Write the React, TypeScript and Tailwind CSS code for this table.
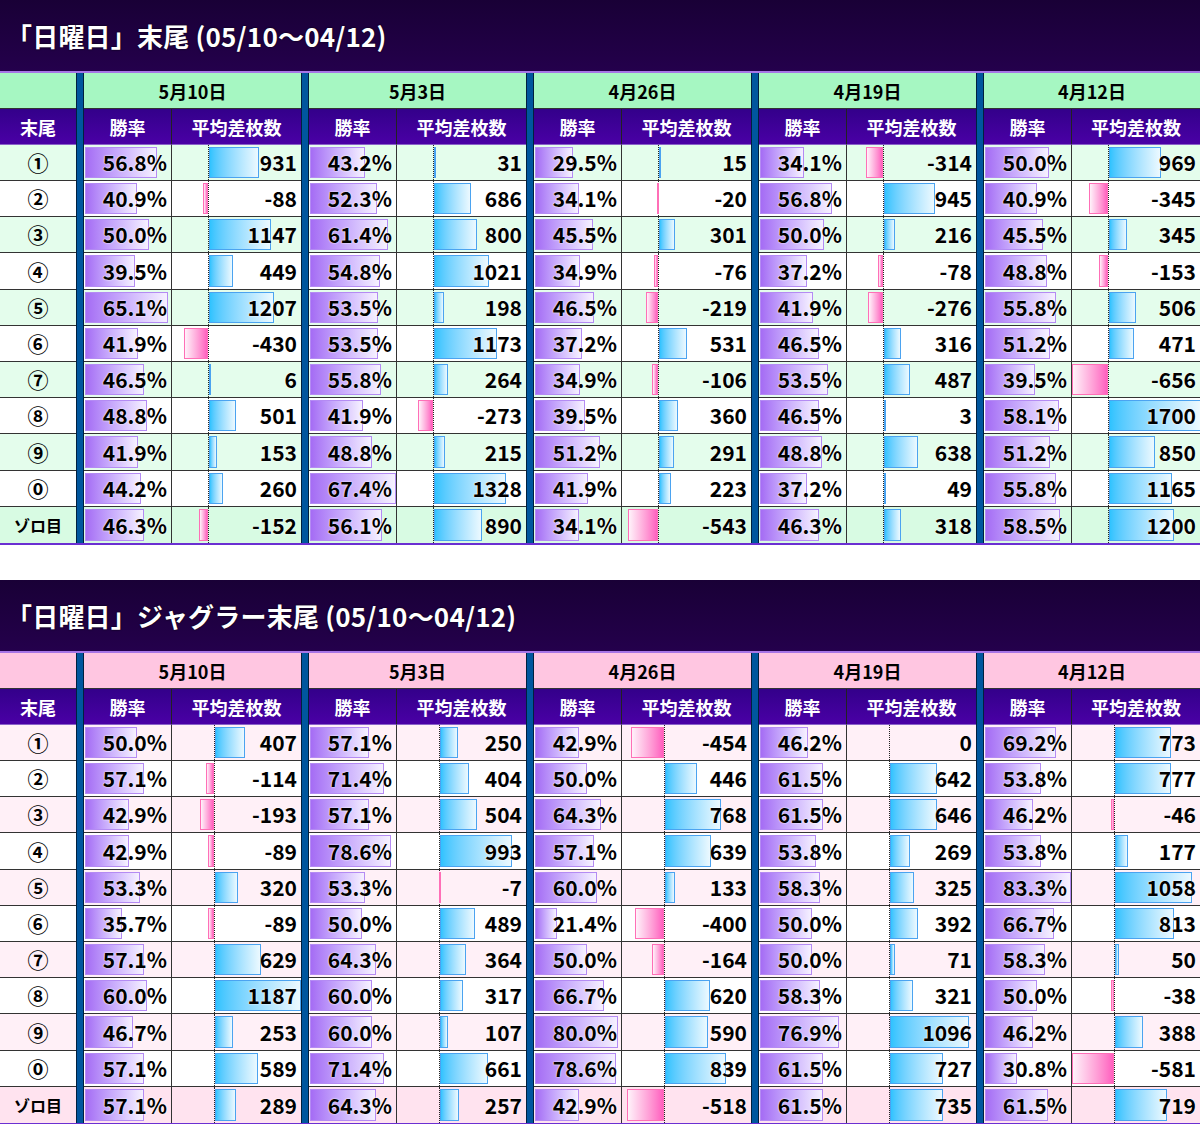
import React from "react";

type Row = [number, number];
type Day = { date: string; rows: Row[] };

const LABELS = ["①", "②", "③", "④", "⑤", "⑥", "⑦", "⑧", "⑨", "⓪", "ゾロ目"];

const TOP: Day[] = [
  { date: "5月10日", rows: [[56.8, 931], [40.9, -88], [50.0, 1147], [39.5, 449], [65.1, 1207], [41.9, -430], [46.5, 6], [48.8, 501], [41.9, 153], [44.2, 260], [46.3, -152]] },
  { date: "5月3日", rows: [[43.2, 31], [52.3, 686], [61.4, 800], [54.8, 1021], [53.5, 198], [53.5, 1173], [55.8, 264], [41.9, -273], [48.8, 215], [67.4, 1328], [56.1, 890]] },
  { date: "4月26日", rows: [[29.5, 15], [34.1, -20], [45.5, 301], [34.9, -76], [46.5, -219], [37.2, 531], [34.9, -106], [39.5, 360], [51.2, 291], [41.9, 223], [34.1, -543]] },
  { date: "4月19日", rows: [[34.1, -314], [56.8, 945], [50.0, 216], [37.2, -78], [41.9, -276], [46.5, 316], [53.5, 487], [46.5, 3], [48.8, 638], [37.2, 49], [46.3, 318]] },
  { date: "4月12日", rows: [[50.0, 969], [40.9, -345], [45.5, 345], [48.8, -153], [55.8, 506], [51.2, 471], [39.5, -656], [58.1, 1700], [51.2, 850], [55.8, 1165], [58.5, 1200]] },
];

const BOTTOM: Day[] = [
  { date: "5月10日", rows: [[50.0, 407], [57.1, -114], [42.9, -193], [42.9, -89], [53.3, 320], [35.7, -89], [57.1, 629], [60.0, 1187], [46.7, 253], [57.1, 589], [57.1, 289]] },
  { date: "5月3日", rows: [[57.1, 250], [71.4, 404], [57.1, 504], [78.6, 993], [53.3, -7], [50.0, 489], [64.3, 364], [60.0, 317], [60.0, 107], [71.4, 661], [64.3, 257]] },
  { date: "4月26日", rows: [[42.9, -454], [50.0, 446], [64.3, 768], [57.1, 639], [60.0, 133], [21.4, -400], [50.0, -164], [66.7, 620], [80.0, 590], [78.6, 839], [42.9, -518]] },
  { date: "4月19日", rows: [[46.2, 0], [61.5, 642], [61.5, 646], [53.8, 269], [58.3, 325], [50.0, 392], [50.0, 71], [58.3, 321], [76.9, 1096], [61.5, 727], [61.5, 735]] },
  { date: "4月12日", rows: [[69.2, 773], [53.8, 777], [46.2, -46], [53.8, 177], [83.3, 1058], [66.7, 813], [58.3, 50], [50.0, -38], [46.2, 388], [30.8, -581], [61.5, 719]] },
];

const GRID =
  "grid grid-cols-[76px_8px_88px_129px_8px_88px_129px_8px_88px_129px_8px_88px_129px_8px_88px_128px]";

type Theme = {
  head: string;
  odd: string;
  even: string;
  zoro: string;
};

const GREEN: Theme = {
  head: "bg-[#a6f7c2]",
  odd: "bg-[#e4fdec]",
  even: "bg-white",
  zoro: "bg-[#d8fbe3]",
};

const PINK: Theme = {
  head: "bg-[#ffc6e1]",
  odd: "bg-[#fff0f7]",
  even: "bg-white",
  zoro: "bg-[#ffe3ef]",
};

function Sep() {
  return <div className="h-full bg-[#00569e] border-x border-[#00203f]" />;
}

const NUM =
  "relative font-bold text-[21px] leading-none text-black [text-shadow:0_0_2px_#ffffff,0_0_1px_#ffffff]";

function RateCell({ v, max, bg, last }: { v: number; max: number; bg: string; last: boolean }) {
  return (
    <div className={`relative h-full border-r border-[#333] ${last ? "" : "border-b"} ${bg} flex items-center justify-end pr-[4px]`}>
      <div
        className="absolute left-[1px] top-[2px] bottom-[2px] border border-[#b48bf3] bg-gradient-to-r from-[#a56cf4] to-[#f6f1ff]"
        style={{ width: `${(v / max) * 86}px` }}
      />
      <span className={NUM}>{v.toFixed(1)}%</span>
    </div>
  );
}

function DiffCell({ v, min, max, bg, last }: { v: number; min: number; max: number; bg: string; last: boolean }) {
  const W = 128;
  const scale = W / (max - min);
  const axis = -min * scale;
  const len = Math.abs(v) * scale;
  return (
    <div className={`relative h-full border-[#333] ${last ? "" : "border-b"} ${bg} flex items-center justify-end pr-[4px]`}>
      <div className="absolute top-0 bottom-0 border-l border-dotted border-[#222]" style={{ left: `${axis}px` }} />
      {v > 0 && (
        <div
          className="absolute top-[2px] bottom-[2px] border border-[#4ba3f0] bg-gradient-to-r from-[#2ec3ff] to-[#ecf9ff]"
          style={{ left: `${axis + 1}px`, width: `${len}px` }}
        />
      )}
      {v < 0 && (
        <div
          className="absolute top-[2px] bottom-[2px] border border-[#ff6fb7] bg-gradient-to-r from-[#fff2fa] to-[#ff5ebf]"
          style={{ left: `${axis - len}px`, width: `${len}px` }}
        />
      )}
      <span className={NUM}>{v}</span>
    </div>
  );
}

function Section({ title, days, theme }: { title: string; days: Day[]; theme: Theme }) {
  const rates = days.flatMap((d) => d.rows.map((r) => r[0]));
  const diffs = days.flatMap((d) => d.rows.map((r) => r[1]));
  const maxRate = Math.max(...rates);
  const minDiff = Math.min(0, ...diffs);
  const maxDiff = Math.max(0, ...diffs);

  return (
    <div className="w-[1200px]">
      <div className="h-[73px] bg-gradient-to-b from-[#190036] to-[#24004c] border-b-2 border-[#a675e6] flex items-center pl-[6px]">
        <span className="text-white font-bold text-[26px] leading-none tracking-[0.2px] [text-shadow:0_0_2px_#000]">
          {title}
        </span>
      </div>
      <div className="border-b-2 border-[#6b2fd2]">
        {/* date header */}
        <div className={`${GRID} h-[36px]`}>
          <div className={`${theme.head} border-b border-[#333] h-full`} />
          {days.map((d) => (
            <React.Fragment key={d.date}>
              <Sep />
              <div className={`col-span-2 ${theme.head} border-b border-[#333] h-full flex items-center justify-center`}>
                <span className="font-bold text-[18px] leading-none text-black">{d.date}</span>
              </div>
            </React.Fragment>
          ))}
        </div>
        {/* column header */}
        <div className={`${GRID} h-[36px]`}>
          <div className="h-full bg-gradient-to-b from-[#33008a] to-[#4a00a6] border-b border-[#8a62c8] flex items-center justify-center">
            <span className="text-white font-bold text-[18px] leading-none">末尾</span>
          </div>
          {days.map((d) => (
            <React.Fragment key={d.date}>
              <Sep />
              <div className="h-full bg-gradient-to-b from-[#33008a] to-[#4a00a6] border-b border-r border-[#8a62c8] border-r-[#222] flex items-center justify-center">
                <span className="text-white font-bold text-[18px] leading-none">勝率</span>
              </div>
              <div className="h-full bg-gradient-to-b from-[#33008a] to-[#4a00a6] border-b border-[#8a62c8] flex items-center justify-center">
                <span className="text-white font-bold text-[18px] leading-none">平均差枚数</span>
              </div>
            </React.Fragment>
          ))}
        </div>
        {/* data rows */}
        {LABELS.map((label, i) => {
          const last = i === LABELS.length - 1;
          const bg = last ? theme.zoro : i % 2 === 0 ? theme.odd : theme.even;
          const h = i === 3 || i === 8 ? "h-[37px]" : "h-[36px]";
          return (
            <div key={label} className={`${GRID} ${h}`}>
              <div className={`h-full ${bg} ${last ? "" : "border-b"} border-[#333] flex items-center justify-center`}>
                <span className={last ? "font-bold text-[16px] leading-none text-black" : "text-[21px] leading-none text-black font-bold"}>
                  {label}
                </span>
              </div>
              {days.map((d) => (
                <React.Fragment key={d.date}>
                  <Sep />
                  <RateCell v={d.rows[i][0]} max={maxRate} bg={bg} last={last} />
                  <DiffCell v={d.rows[i][1]} min={minDiff} max={maxDiff} bg={bg} last={last} />
                </React.Fragment>
              ))}
            </div>
          );
        })}
      </div>
    </div>
  );
}

export default function App() {
  return (
    <div className="w-[1200px] bg-white font-['Noto_Sans_CJK_JP','Noto_Sans',sans-serif]">
      <Section title="「日曜日」末尾 (05/10～04/12)" days={TOP} theme={GREEN} />
      <div className="h-[35px] bg-white" />
      <Section title="「日曜日」ジャグラー末尾 (05/10～04/12)" days={BOTTOM} theme={PINK} />
    </div>
  );
}
